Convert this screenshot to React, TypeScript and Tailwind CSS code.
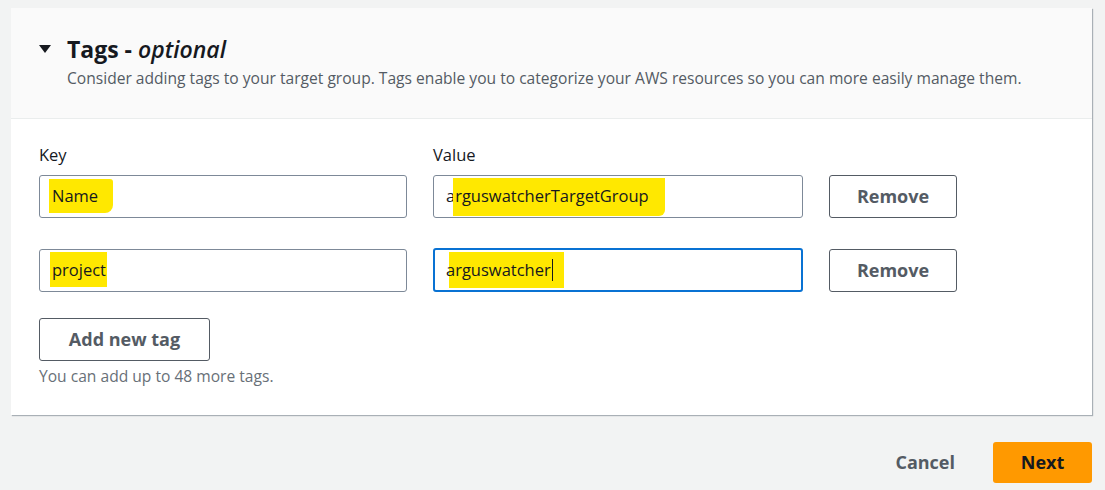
import React from "react";

const font = { fontFamily: '"Open Sans", "Noto Sans", sans-serif' };

const Marker: React.FC<{ children: React.ReactNode; className?: string }> = ({ children, className }) => (
  <span className="relative inline-block">
    <span className={"absolute bg-[#ffe800] " + (className || "")} />
    <span className="relative">{children}</span>
  </span>
);

const Field: React.FC<{ focused?: boolean; wide?: boolean; children: React.ReactNode }> = ({ focused, wide, children }) => (
  <div
    className={
      focused
        ? "h-[44px] w-[370px] rounded-[3px] border-2 border-[#0972d3] bg-white pl-[11px] flex items-center text-[16.5px] text-[#16191f]"
        : "h-[43px] rounded-[3px] border border-[#7d8998] bg-white pl-[12px] flex items-center text-[16.5px] text-[#16191f] " +
          (wide ? "w-[370px]" : "w-[368px]")
    }
  >
    {children}
  </div>
);

const OutlineButton: React.FC<{ label: string; className?: string }> = ({ label, className }) => (
  <button
    className={
      "h-[43px] rounded-[3px] border border-[#545b64] bg-white text-[18px] font-bold text-[#545b64] " + (className || "")
    }
  >
    {label}
  </button>
);

export default function App() {
  return (
    <div className="min-h-[490px] w-[1105px] bg-[#f2f3f3] pt-[8px]" style={font}>
      <div className="ml-[11px] w-[1081px] bg-white shadow-[1px_1px_1px_rgba(0,22,44,0.3)]">
        <div className="h-[111px] bg-[#fafafa] border-b border-[#eaeded] pl-[27px] pt-[25px]">
          <div className="flex items-center gap-[15px]">
            <svg width="14" height="10" viewBox="0 0 14 10">
              <polygon points="1,1 13,1 7,9" fill="#16191f" />
            </svg>
            <h2 className="text-[23px] font-bold text-[#16191f] leading-[32px]">
              Tags - <i className="font-semibold">optional</i>
            </h2>
          </div>
          <p className="ml-[29px] mt-[2px] text-[15.6px] text-[#545b64]">
            Consider adding tags to your target group. Tags enable you to categorize your AWS resources so you can more
            easily manage them.
          </p>
        </div>

        <div className="pl-[28px] pt-[24px] pb-[27px]">
          <div className="flex gap-[26px] text-[16.5px] text-[#16191f] leading-[24px]">
            <div className="w-[368px]">Key</div>
            <div>Value</div>
          </div>

          <div className="mt-[8px] flex items-center gap-[26px]">
            <Field>
              <Marker className="-left-[3px] -right-[15px] -top-[5px] -bottom-[4px] rounded-br-[8px] rounded-tr-[3px]">
                Name
              </Marker>
            </Field>
            <Field wide>
              <span>a</span>
              <Marker className="-left-[2px] -right-[16px] -top-[6px] -bottom-[7px] rounded-br-[6px]">
                rguswatcherTargetGroup
              </Marker>
            </Field>
            <OutlineButton label="Remove" className="w-[128px]" />
          </div>

          <div className="mt-[30px] flex items-center gap-[26px]">
            <Field>
              <Marker className="-left-[2px] -right-[1px] -top-[6px] -bottom-[5px]">project</Marker>
            </Field>
            <Field focused>
              <span className="relative inline-flex items-center">
                <span className="absolute left-[3px] -right-[11px] -top-[6px] -bottom-[6px] bg-[#ffe800]" />
                <span className="relative">arguswatcher</span>
                <span className="relative ml-[1px] inline-block h-[22px] w-[1px] bg-[#16191f]" />
              </span>
            </Field>
            <OutlineButton label="Remove" className="w-[128px]" />
          </div>

          <OutlineButton label="Add new tag" className="mt-[26px] w-[171px]" />
          <p className="mt-[4px] text-[15.6px] text-[#687078]">You can add up to 48 more tags.</p>
        </div>
      </div>

      <div className="mt-[27px] mr-[13px] flex items-center justify-end gap-[38px]">
        <button className="text-[18px] font-bold text-[#545b64]">Cancel</button>
        <button className="h-[41px] w-[99px] rounded-[3px] bg-[#ff9900] text-[18px] font-bold text-[#16191f]">
          Next
        </button>
      </div>
    </div>
  );
}
